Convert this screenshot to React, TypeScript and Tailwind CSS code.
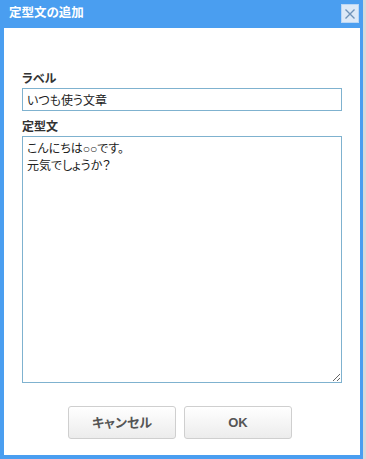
export default function App() {
  const font = "font-['Liberation_Sans','Noto_Sans_CJK_JP',sans-serif] [font-feature-settings:'palt']";

  return (
    <div className={`flex h-[459px] w-[366px] bg-[#d9d9d9] ${font}`}>
      <div className="flex h-[459px] w-[363px] flex-col bg-[#4a9ef0]">
        {/* title bar */}
        <div className="flex h-[28px] items-start justify-between pl-[9px] pr-[4px]">
          <span className="mt-[6px] text-[12.5px] font-bold leading-[14px] text-white">
            定型文の追加
          </span>
          <button className="mt-[4px] flex h-[19px] w-[18px] items-center justify-center border border-[#b9d6f5] bg-[#dce9f7]">
            <svg width="12" height="12" viewBox="0 0 12 12">
              <path d="M1.5 1.5 L10.5 10.5 M10.5 1.5 L1.5 10.5" stroke="#6f93b8" strokeWidth="1.4" fill="none" />
            </svg>
          </button>
        </div>

        {/* body */}
        <div className="mb-[4px] ml-[4px] mr-[3px] flex flex-1 flex-col bg-white px-[18px] pt-[43px]">
          <label className="mb-[1px] text-[12px] font-bold leading-[16px] text-[#333]">ラベル</label>
          <input
            defaultValue="いつも使う文章"
            className="h-[23px] w-[320px] border border-[#7fb2cf] px-[4px] text-[12px] text-[#222] outline-none"
          />

          <label className="mb-[1px] mt-[8px] text-[12px] font-bold leading-[16px] text-[#333]">定型文</label>
          <textarea
            defaultValue={"こんにちは○○です。\n元気でしょうか？"}
            className="h-[247px] w-[320px] border border-[#7fb2cf] px-[4px] pt-[4px] text-[12px] leading-[17px] text-[#222] outline-none"
          />

          <div className="mt-[23px] flex justify-center gap-[8px] pr-[4px]">
            <button className="h-[33px] w-[108px] rounded-[3px] border border-[#cfcfcf] bg-gradient-to-b from-white to-[#ececec] text-[13px] font-bold text-[#555]">
              キャンセル
            </button>
            <button className="h-[33px] w-[108px] rounded-[3px] border border-[#cfcfcf] bg-gradient-to-b from-white to-[#ececec] text-[13px] font-bold text-[#555]">
              OK
            </button>
          </div>
        </div>
      </div>
    </div>
  );
}
